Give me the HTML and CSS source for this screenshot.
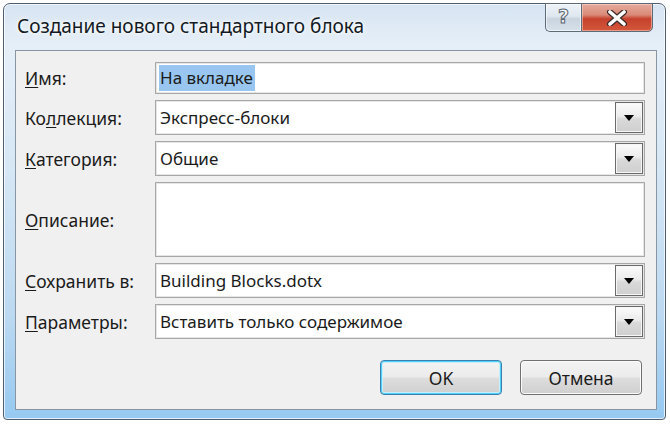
FILE: index.html
```html
<!DOCTYPE html>
<html lang="ru">
<head>
<meta charset="utf-8">
<title>Создание нового стандартного блока</title>
<link rel="stylesheet" href="styles.css">
</head>
<body>
<div class="window">
  <div class="titlebar">
    <div class="title">Создание нового стандартного блока</div>
    <div class="caption-btns">
      <div class="cap-btn help"><span class="q">?</span></div>
      <div class="cap-btn close">
        <svg width="22" height="16" viewBox="0 0 22 16">
          <path d="M4 2 L18 14 M18 2 L4 14" stroke="#3a2a2a" stroke-width="6" stroke-linecap="round" fill="none"/>
          <path d="M4 2 L18 14 M18 2 L4 14" stroke="#ffffff" stroke-width="3.6" stroke-linecap="round" fill="none"/>
        </svg>
      </div>
    </div>
  </div>
  <div class="client">
    <div class="form">
      <div class="lbl"><u>И</u>мя:</div>
      <div class="field r1"><span class="sel">На вкладке</span></div>

      <div class="lbl">Ко<u>л</u>лекция:</div>
      <div class="field combo r2"><span class="val">Экспресс-блоки</span><span class="drop"><span class="tri"></span></span></div>

      <div class="lbl"><u>К</u>атегория:</div>
      <div class="field combo r3"><span class="val">Общие</span><span class="drop"><span class="tri"></span></span></div>

      <div class="lbl"><u>О</u>писание:</div>
      <div class="field r4"></div>

      <div class="lbl"><u>С</u>охранить в:</div>
      <div class="field combo r5"><span class="val">Building Blocks.dotx</span><span class="drop"><span class="tri"></span></span></div>

      <div class="lbl"><u>П</u>араметры:</div>
      <div class="field combo r6"><span class="val">Вставить только содержимое</span><span class="drop"><span class="tri"></span></span></div>
    </div>
    <div class="actions">
      <div class="btn default">OK</div>
      <div class="btn">Отмена</div>
    </div>
  </div>
</div>
</body>
</html>
```

FILE: styles.css
```css
html, body {
  margin: 0;
  padding: 0;
  background: #ffffff;
}
body {
  font-family: "Noto Sans", "Open Sans", sans-serif;
  color: #1b1b1b;
}
.window {
  margin: 3px 0 0 3px;
  width: 663px;
  height: 417px;
  box-sizing: border-box;
  border: 1px solid #4f5f70;
  border-radius: 7px 7px 4px 4px;
  background: linear-gradient(to bottom, #d6e4f2 0%, #e6eff8 10%, #d6e7f5 40%, #bcd9f1 75%, #96c9f1 100%);
  display: flex;
  flex-direction: column;
  box-shadow: inset 0 0 0 1px rgba(255,255,255,0.7);
}
.titlebar {
  height: 46px;
  display: flex;
  align-items: flex-start;
  flex: none;
}
.title {
  padding: 10px 0 0 13px;
  font-size: 19px;
  line-height: 24px;
  color: #131a24;
  text-shadow: 0 0 6px #ffffff, 0 0 3px #ffffff;
}
.caption-btns {
  margin: -1px 12px 0 auto;
  display: flex;
  height: 29px;
}
.cap-btn {
  height: 29px;
  box-sizing: border-box;
  border: 1px solid #5d6a78;
  display: flex;
  align-items: center;
  justify-content: center;
}
.help {
  width: 36px;
  border-right: none;
  border-radius: 0 0 0 5px;
  background: linear-gradient(to bottom, #eef3f8 0%, #dfe7ef 45%, #c9d4df 55%, #d8e1ea 100%);
  box-shadow: inset 0 0 0 1px rgba(255,255,255,0.6);
}
.q {
  font-family: "DejaVu Sans", sans-serif;
  font-size: 19px;
  font-weight: bold;
  color: #f4f6f8;
  -webkit-text-stroke: 1px #5a6470;
  line-height: 1;
  margin-top: -2px;
}
.close {
  width: 72px;
  border-radius: 0 0 5px 0;
  background: linear-gradient(to bottom, #e6ab9d 0%, #da8a78 40%, #c6412d 55%, #d3583a 100%);
  box-shadow: inset 0 0 0 1px rgba(255,220,210,0.5);
}
.client {
  flex: 1;
  margin: 0 8px 9px 11px;
  border: 1px solid #8896a4;
  background: #f0f0f0;
  display: flex;
  flex-direction: column;
}
.form {
  padding: 11px 11px 0 9px;
  display: grid;
  grid-template-columns: 130px 1fr;
  grid-template-rows: 32px 35px 35px 75px 35px 35px;
  row-gap: 6px;
}
.lbl {
  display: flex;
  align-items: center;
  font-size: 17.5px;
  color: #1b1b1b;
}
.lbl u {
  text-decoration-thickness: 1px;
  text-underline-offset: 2px;
}
.field {
  box-sizing: border-box;
  border: 1px solid #a7a7a7;
  box-shadow: inset 0 0 0 1px #e6e6e6;
  background: #ffffff;
  display: flex;
  align-items: center;
  padding-left: 4px;
  font-size: 17px;
  position: relative;
}
.sel {
  background: #98c6f0;
  padding: 1px 2px 2px 1px;
  margin-left: -1px;
}
.val {
  flex: 1;
}
.drop {
  width: 28px;
  height: 31px;
  margin-right: 1px;
  box-sizing: border-box;
  border: 1px solid #6a6a6a;
  background: linear-gradient(to bottom, #fbfbfb 0%, #ececec 45%, #d9d9d9 55%, #cfcfcf 100%);
  box-shadow: inset 0 0 0 1px #f6f6f6;
  display: flex;
  align-items: center;
  justify-content: center;
}
.tri {
  width: 0;
  height: 0;
  border-left: 5px solid transparent;
  border-right: 5px solid transparent;
  border-top: 6px solid #000000;
}
.actions {
  display: flex;
  justify-content: flex-end;
  gap: 18px;
  margin-top: 21px;
  padding-right: 14px;
}
.btn {
  width: 122px;
  height: 35px;
  box-sizing: border-box;
  border: 1px solid #707070;
  border-radius: 4px;
  background: linear-gradient(to bottom, #f3f3f3 0%, #ebebeb 48%, #dddddd 52%, #cfcfcf 100%);
  box-shadow: inset 0 0 0 1px #fbfbfb;
  display: flex;
  align-items: center;
  justify-content: center;
  font-size: 17.5px;
  color: #1b1b1b;
}
.btn.default {
  border-color: #3c7fb1;
  box-shadow: inset 0 0 0 1px #4fd0f7, inset 0 0 0 2px #c7eefc;
}
```
